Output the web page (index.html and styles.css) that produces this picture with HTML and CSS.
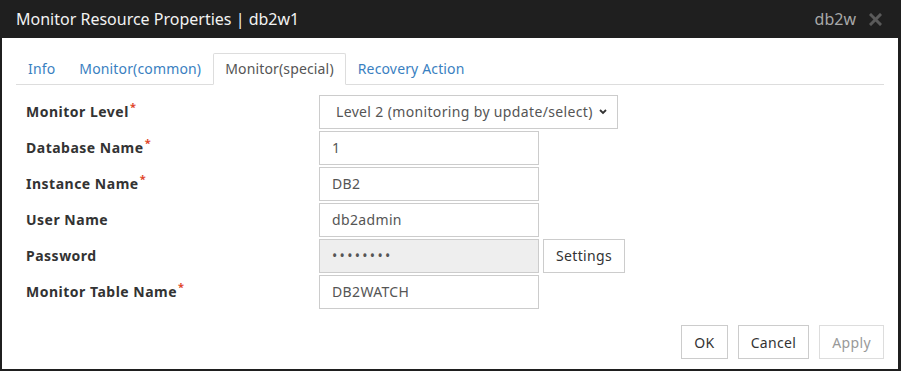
FILE: index.html
```html
<!DOCTYPE html>
<html lang="en">
<head>
  <meta charset="UTF-8" />
  <title>Monitor Resource Properties | db2w1</title>
  <link rel="stylesheet" href="styles.css">
</head>
<body>

  <div class="dialog">
    <div class="titlebar">
      <span class="title">Monitor Resource Properties | db2w1</span>
      <span class="res-name">db2w</span>
      <svg class="close-x" width="13" height="13" viewBox="0 0 13 13">
        <path d="M2 2 L11 11 M11 2 L2 11" stroke="#5a5a5a" stroke-width="3" stroke-linecap="square" />
      </svg>
    </div>

    <div class="content">
      <ul class="tabs">
        <li class="tab">Info</li>
        <li class="tab">Monitor(common)</li>
        <li class="tab active">Monitor(special)</li>
        <li class="tab">Recovery Action</li>
      </ul>

      <div class="form">
        <div class="row">
          <label>Monitor Level<sup>*</sup></label>
          <div class="select-wrap">
            <select class="select">
              <option>Level 2 (monitoring by update/select)</option>
            </select>
            <svg class="chevron" width="8" height="6" viewBox="0 0 8 6">
              <path d="M1 1 L4 4 L7 1" fill="none" stroke="#333" stroke-width="1.8" />
            </svg>
          </div>
        </div>
        <div class="row">
          <label>Database Name<sup>*</sup></label>
          <input class="field" type="text" value="1">
        </div>
        <div class="row">
          <label>Instance Name<sup>*</sup></label>
          <input class="field" type="text" value="DB2">
        </div>
        <div class="row">
          <label>User Name</label>
          <input class="field" type="text" value="db2admin">
        </div>
        <div class="row">
          <label>Password</label>
          <input class="field readonly" type="password" value="password" readonly>
          <button class="btn settings">Settings</button>
        </div>
        <div class="row">
          <label>Monitor Table Name<sup>*</sup></label>
          <input class="field" type="text" value="DB2WATCH">
        </div>
      </div>

      <div class="footer">
        <button class="btn">OK</button>
        <button class="btn">Cancel</button>
        <button class="btn disabled">Apply</button>
      </div>
    </div>
  </div>

</body>
</html>
```

FILE: styles.css
```css
* {
  margin: 0;
  padding: 0;
  box-sizing: border-box;
}

body {
  font-family: 'Noto Sans', 'Open Sans', sans-serif;
  background: #1f1f1f;
  color: #333;
  font-size: 14px;
  letter-spacing: 0.35px;
}

.dialog {
  width: 901px;
  height: 371px;
  display: flex;
  flex-direction: column;
}

.titlebar {
  height: 38px;
  display: flex;
  align-items: center;
  padding: 0 19px 0 16px;
  color: #f2f2f2;
  font-size: 16px;
  letter-spacing: 0;
}

.title {
  flex: 1;
}

.res-name {
  color: #a8a8a8;
  margin-right: 13px;
}

.content {
  flex: 1;
  background: #fff;
  margin: 0 3px 2px 2px;
  padding: 15px 14px 0 14px;
}

.tabs {
  list-style: none;
  display: flex;
  border-bottom: 1px solid #ddd;
}

.tab {
  height: 32px;
  line-height: 30px;
  padding: 0 11px;
  border: 1px solid transparent;
  margin-bottom: -1px;
  border-radius: 2px 2px 0 0;
  color: #3a7fc1;
  letter-spacing: 0.15px;
  cursor: pointer;
}

.tab.active {
  color: #555;
  border-color: #ddd;
  border-bottom-color: #fff;
  background: #fff;
}

.form {
  padding: 10px 0 0 10px;
  display: flex;
  flex-direction: column;
  gap: 3px;
}

.row {
  display: flex;
  align-items: center;
  height: 33px;
}

.row label {
  width: 293px;
  font-weight: bold;
  color: #333;
  letter-spacing: 0.5px;
}

sup {
  color: #e0452a;
  font-size: 11px;
  font-weight: bold;
  vertical-align: 6px;
  line-height: 0;
  margin-left: 1px;
}

.select-wrap {
  position: relative;
  width: 299px;
  height: 34px;
}

.select {
  appearance: none;
  width: 100%;
  height: 100%;
  border: 1px solid #ccc;
  background: #fff;
  padding: 0 16px;
  font: inherit;
  letter-spacing: inherit;
  color: #555;
}

.chevron {
  position: absolute;
  right: 11px;
  top: 14px;
}

.field {
  width: 220px;
  height: 34px;
  border: 1px solid #ccc;
  padding: 0 12px;
  font: inherit;
  letter-spacing: inherit;
  color: #555;
}

.field.readonly {
  background: #eee;
  letter-spacing: 2.3px;
}

.btn {
  height: 34px;
  border: 1px solid #ccc;
  background: #fff;
  font: inherit;
  letter-spacing: inherit;
  color: #333;
  padding: 0 12px;
  cursor: pointer;
}

.settings {
  margin-left: 4px;
  width: 82px;
}

.footer {
  display: flex;
  justify-content: flex-end;
  gap: 10px;
  margin-top: 17px;
}

.btn.disabled {
  color: #999;
  border-color: #ddd;
  cursor: default;
}
```
